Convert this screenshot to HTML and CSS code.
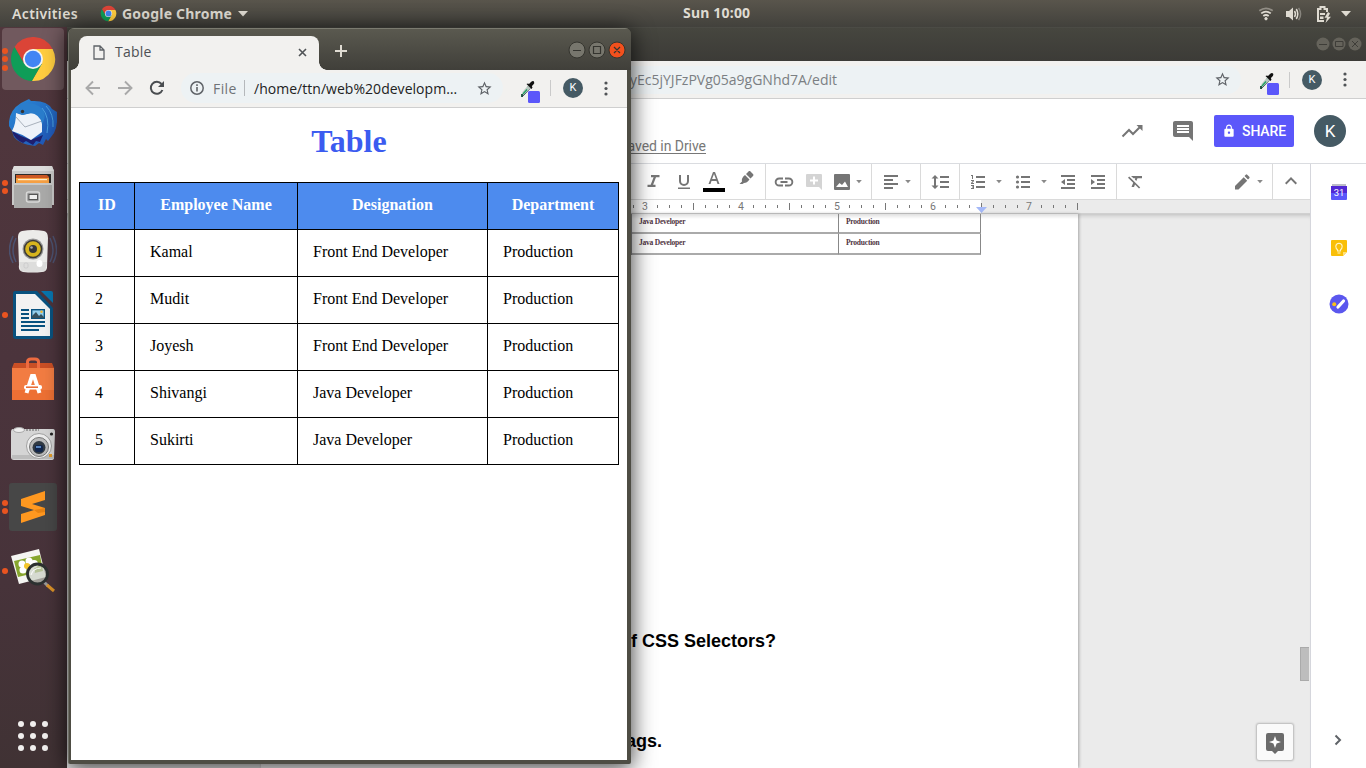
FILE: index.html
```html
<!DOCTYPE html>
<html lang="en">
<head>
<meta charset="utf-8">
<title>Desktop</title>
<link rel="stylesheet" href="styles.css">
</head>
<body>
<svg class="defs" width="0" height="0">
  <symbol id="chrome" viewBox="0 0 48 48">
    <path fill="#db4437" d="M5.54 12.03A22 22 0 0 1 43.6 14H24L24 24 15.34 29Z"/>
    <path fill="#ffcd40" d="M43.6 14A22 22 0 0 1 22.86 45.97L32.66 29 24 24V14Z"/>
    <path fill="#0f9d58" d="M22.86 45.97A22 22 0 0 1 5.54 12.03L15.34 29 24 24 32.66 29Z"/>
    <circle cx="24" cy="24" r="10" fill="#f4f4f4"/><circle cx="24" cy="24" r="8.2" fill="#4285f4"/>
  </symbol>
  <symbol id="star" viewBox="0 0 24 24"><path d="M22 9.24l-7.19-.62L12 2 9.19 8.63 2 9.24l5.46 4.73L5.82 21 12 17.27 18.18 21l-1.63-7.03L22 9.24zM12 15.4l-3.76 2.27 1-4.28-3.32-2.88 4.38-.38L12 6.1l1.71 4.04 4.38.38-3.32 2.88 1 4.28L12 15.4z"/></symbol>
  <symbol id="dropper" viewBox="0 0 22 24">
    <path d="M9.500 7L12 9.500 6 16 4 17.500" fill="none" stroke="#345" stroke-width="1"/><path d="M10 6.500L12.500 9 6 15.500 4 17 4.500 13Z" fill="#b9c8c0"/><path d="M9 10.500L5 15" stroke="#20a060" stroke-width="1.300"/>
    <path d="M8.500 5L10 4.500 11 5 13 3Q15 1.200 16 2.500 17 4 15 6L13.800 7 14.500 8.500 13.500 10Z" fill="#111"/><path d="M4 15V18" stroke="#174a35" stroke-width="1.800"/>
    <rect x="10" y="12" width="12" height="12" rx="1.500" fill="#5b57fa"/>
  </symbol>
  <symbol id="dots" viewBox="0 0 6 18"><circle cx="3" cy="3" r="1.600"/><circle cx="3" cy="8.500" r="1.600"/><circle cx="3" cy="14" r="1.600"/></symbol>
  <symbol id="caret" viewBox="0 0 8 4"><path d="M1.200 0H6.800L4 3.300Z"/></symbol>
</svg>
<div class="desktop">
  <header class="topbar">
    <span class="activities">Activities</span>
    <svg class="top-chrome"><use href="#chrome"/></svg>
    <span class="appname">Google Chrome</span>
    <svg class="top-caret" viewBox="0 0 10 6"><path d="M0 0H10L5 5.500Z"/></svg>
    <span class="clock">Sun 10:00</span>
    <div class="tray">
      <svg width="16" height="16" viewBox="0 0 16 16" fill="none" stroke="#dfdbd2" stroke-width="1.800"><path d="M1.300 4.800Q8-.2 14.700 4.800" opacity=".45"/><path d="M3.200 7.400Q8 3.800 12.800 7.400M5.300 10Q8 8 10.700 10"/><circle cx="8" cy="12.700" r="1.200" fill="#dfdbd2" stroke-width="1"/></svg>
      <svg width="16" height="16" viewBox="0 0 16 16"><path fill="#dfdbd2" d="M0 5H3L7 1.500V14.500L3 11H0Z"/><path d="M8.500 5Q10.500 8 8.500 11M10.300 3Q13.300 8 10.300 13" fill="none" stroke="#dfdbd2" stroke-width="1.500"/><path d="M12.600 1.800Q16.600 8 12.600 14.200" fill="none" stroke="#88857e" stroke-width="1.500"/></svg>
      <svg width="16" height="18" viewBox="0 0 16 18"><path d="M8 16H2V4H4.500V2H8.500V4H11V7" fill="none" stroke="#dfdbd2" stroke-width="2"/><path d="M4 8H9V10H4ZM4 11.500H7.500V14H4Z" fill="#dfdbd2"/><path d="M12 7L8.500 12.800H11L9.500 18 15 11.800H12.200L14 8.500Z" fill="#dfdbd2"/></svg>
      <svg width="10" height="6" viewBox="0 0 10 6"><path fill="#dfdbd2" d="M0 0H10L5 5.500Z"/></svg>
    </div>
  </header>

  <div class="space">
    <nav class="dock">
      <div class="app active"><span class="run"><i></i><i></i><i></i></span><svg><use href="#chrome"/></svg></div>
      <div class="app"><span class="run"></span>
        <svg viewBox="0 0 48 48"><defs><linearGradient id="tb" x2="1" y2="1"><stop stop-color="#2b8bd8"/><stop offset="1" stop-color="#1e4fb0"/></linearGradient></defs>
          <path fill="url(#tb)" d="M12 4L16 2 20 0 22 2Q38 1 43 10L48 13Q49 27 45 34L39 42 37 40 34 46 30 44 26 47Q10 45 5 38L3 32 0 27Q-1 12 12 4Z"/>
          <path fill="#1f1f6e" d="M3 32L12 37 22 41 34 36 31 43 27 42 24 46 17 42 14 44Q5 40 3 32Z"/>
          <path fill="#eef2f8" d="M7 14L13 16 28 13 33 19 33 33 22 41Q13 35 3 32Q7 25 7 14Z"/><path d="M7 18L16 28 33 22" fill="none" stroke="#a9b1bc"/>
          <path fill="#2a7dcc" d="M9 8Q12 3 19 4Q32 5 35 13Q37 19 33 25Q31 15 21 14L14 16 9 14Z"/><path fill="none" stroke="#4ba1e0" d="M37 7Q45 15 44 28M33 9Q41 18 38 34"/><circle cx="13.500" cy="12.500" r="1.700" fill="#333"/></svg></div>
      <div class="app"><span class="run two"><i></i><i></i></span>
        <svg viewBox="0 0 48 48"><path fill="#c9c9c8" d="M5 3H43L45 8V42H3V8Z"/><path fill="#dededd" d="M5 3H43L45 8H3Z"/><path fill="#2d2b29" d="M6 11H42V20H6Z"/><path fill="#cd5823" d="M7 12H38L40 14V19H7Z"/><path fill="#f6a043" d="M7 15H40V20H7Z"/><path fill="#fff0cf" d="M9 16H38V17.200H9Z"/><path fill="#aaaaa9" d="M5 20H43V45H5Z"/><path fill="#c9c9c8" d="M5 20H43V22H5Z"/><rect x="17.500" y="29" width="13" height="10" rx="2" fill="#999" stroke="#d8d8d7" stroke-width="1.500"/><rect x="20" y="31.500" width="8.500" height="5" fill="#eee" stroke="#555"/></svg></div>
      <div class="app"><span class="run"></span>
        <svg viewBox="0 0 48 48"><path d="M4 9Q-3 23 4 36M7 11Q1 23 7 35M44 9Q51 23 44 36M41 11Q47 23 41 35" fill="none" stroke="#4c5270" stroke-width="1.500"/><path fill="#ececea" d="M13 4Q24 2 35 4Q39 5 39 11L38 41Q37 45 33 45Q24 46 14 45Q9 44 10 38L9 10Q9 5 13 4Z"/><path fill="#d1d1cf" d="M10 35L12 44Q24 46 36 44L38 35Z" opacity=".55"/><circle cx="24" cy="22" r="10.500" fill="#999"/><circle cx="24" cy="22" r="9.300" fill="#3b3a37"/><circle cx="24" cy="22" r="7.800" fill="#d6b41d"/><circle cx="24" cy="22" r="4" fill="#353637"/><circle cx="22.500" cy="20.500" r="1.300" fill="#aaa"/><ellipse cx="30.500" cy="36.500" rx="3" ry="3.500" fill="#fff"/><rect x="15" y="36" width="4" height="5" rx="1.500" fill="none" stroke="#ccc"/></svg></div>
      <div class="app"><span class="run"><i></i></span>
        <svg viewBox="0 0 48 48"><path fill="#09527f" d="M6 0H28L44 17V45Q44 48 41 48H7Q4 48 4 45V3Q4 0 6 0Z"/><path fill="#0875ad" d="M32 0H42Q44 0 44 2V12Z"/><path fill="#f2f2f2" d="M7 3H26L41 18V45H7Z"/><path d="M12 19H20M12 23H20M12 27H20M12 31H36M12 35H36M12 39H30" stroke="#09527f" stroke-width="2"/><rect x="22.700" y="18.700" width="12.600" height="8.600" fill="#94d0ee" stroke="#09527f" stroke-width="1.400"/><path fill="#37515e" d="M23 27V25L27 21 30 25 32 23 35 26V27Z"/><circle cx="32.500" cy="20.700" r="1.200" fill="#f8b62d"/></svg></div>
      <div class="app"><span class="run"></span>
        <svg viewBox="0 0 48 48"><path fill="#c94f25" d="M5 8H43L45 13H3Z"/><path fill="none" stroke="#ed6b40" stroke-width="3" d="M18.500 15V7Q18.500 4 22 4H26Q29.500 4 29.500 7V15"/><path fill="#f27c42" d="M3 13H45V45H3Z"/><path fill="#ed7034" d="M3 35H45V45H3Z"/><path d="M17.500 38L23 21H25L30.500 38" stroke="white" stroke-width="4" fill="none"/><path d="M22 21H26" stroke="#fff" stroke-width="2"/><rect x="15" y="30" width="18" height="4.500" rx="2" fill="#fff"/><path d="M17 32.200H29" stroke="#e9662d" stroke-width="1.500"/></svg></div>
      <div class="app"><span class="run"></span>
        <svg viewBox="0 0 48 48"><path fill="#d5d5d5" d="M4 10H44Q46 10 46 13L45 39Q45 41 42 41H5Q2 41 2 38V13Q2 10 4 10Z"/><path fill="#bdbdbd" d="M3 36H45V40H3Z"/><ellipse cx="10" cy="11" rx="5.500" ry="2.500" fill="#eee" stroke="#aaa"/><path d="M17 11H30" stroke="#888" stroke-width="1.500" stroke-dasharray="2 1"/><circle cx="30" cy="27" r="12.500" fill="#eee" stroke="#a0a0a0"/><circle cx="30" cy="28" r="9.500" fill="#bbb" stroke="#777"/><circle cx="30" cy="28.500" r="6.500" fill="#303942"/><rect x="26" y="26" width="8" height="7" rx="2" fill="#12264c"/><path fill="#5885be" d="M27 27H32V29H27Z"/><circle cx="42.500" cy="15" r="1.600" fill="#222"/><path fill="#e39b29" d="M40 35H43V38H40Z"/></svg></div>
      <div class="app"><span class="run two"><i></i><i></i></span>
        <svg viewBox="0 0 48 48"><rect width="48" height="48" rx="3" fill="#474747"/><path fill="#ff9820" d="M12 16L36 8V17L23 21 36 25V32L12 40V31L25 27 12 23Z"/><path fill="#e88312" d="M25 27L36 25V29L29 30Z"/></svg></div>
      <div class="app"><span class="run"><i></i></span>
        <svg viewBox="0 0 48 48"><path fill="#f5f5f2" d="M2 9L30 2 37 30 10 37Z"/><path fill="#87a62e" d="M5 14L31 8 34 24 9 30Z"/><g fill="#fff"><circle cx="13" cy="17" r="3.500"/><circle cx="20" cy="14" r="3.500"/><circle cx="14" cy="23" r="3.500"/><circle cx="22" cy="24" r="4"/><circle cx="25" cy="17" r="4"/></g><circle cx="18" cy="19" r="3" fill="#f5c62b"/><path d="M35 35L39 39" stroke="#999" stroke-width="3"/><path d="M38 38L45 44" stroke="#dc9328" stroke-width="3"/><circle cx="28.500" cy="27" r="10" fill="#c9cec3" fill-opacity=".7" stroke="#2c3030" stroke-width="2.800"/><path d="M22 28Q24 21 32 21" stroke="#fff" fill="none"/></svg></div>
      <svg class="launcher" viewBox="0 0 30 30" fill="#f1efee"><g id="l"><circle cx="3" cy="3" r="3"/><circle cx="15" cy="3" r="3"/><circle cx="27" cy="3" r="3"/></g><use href="#l" y="12"/><use href="#l" y="24"/></svg>
    </nav>

    <main class="workspace">
      <section class="window back">
        <div class="back-title">
          <svg width="46" height="14" viewBox="0 0 46 14"><g fill="#65635b"><circle cx="7" cy="7" r="6.500"/><circle cx="23" cy="7" r="6.500"/><circle cx="39" cy="7" r="6.500"/></g><g fill="none" stroke="#3e3d38"><path d="M3 7.500H11M19.500 4.500H27V9.500H19.500ZM36 4L42 10M42 4L36 10"/></g></svg>
        </div>
        <div class="back-nav">
          <div class="back-omni"><span class="back-url">yEc5jYJFzPVg05a9gGNhd7A/edit</span><svg class="star"><use href="#star"/></svg></div>
          <svg class="dropper"><use href="#dropper"/></svg><span class="divider"></span><span class="mini">K</span><svg class="dots"><use href="#dots"/></svg>
        </div>
        <div class="docs-head">
          <span class="saved">saved in Drive</span>
          <div class="docs-actions">
            <svg width="24" height="24" viewBox="0 0 24 24"><path d="M2.500 17.500L9 11 13 15 20.500 7.500" fill="none" stroke="#757575" stroke-width="2"/><path fill="#757575" d="M16.500 6H22.500V12Z"/></svg>
            <svg class="talk" width="24" height="24" viewBox="0 0 24 24"><path fill="#757575" d="M21.990 4c0-1.100-.89-2-1.990-2H4c-1.100 0-2 .9-2 2v12c0 1.100.9 2 2 2h14l4 4-.01-18zM18 14H6v-2h12v2zm0-3H6V9h12v2zm0-3H6V6h12v2z"/></svg>
            <span class="share"><svg width="14" height="14" viewBox="0 0 24 24"><path fill="#fff" d="M18 8h-1V6c0-2.760-2.240-5-5-5S7 3.240 7 6v2H6c-1.100 0-2 .9-2 2v10c0 1.100.9 2 2 2h12c1.100 0 2-.9 2-2V10c0-1.100-.9-2-2-2zm-6 9c-1.100 0-2-.9-2-2s.9-2 2-2 2 .9 2 2-.9 2-2 2zm3.100-9H8.900V6c0-1.710 1.390-3.100 3.100-3.100 1.710 0 3.100 1.390 3.100 3.100v2z"/></svg>SHARE</span>
            <span class="avatar">K</span>
          </div>
        </div>
        <div class="docs-body">
          <div class="editor">
            <div class="tools">
              <div class="group g1">
                <svg viewBox="0 0 24 24"><path d="M10 6v2.200h2.600l-2.900 7.600H6.500V18H14.500v-2.200h-2.400l2.900-7.600H18.500V6z"/></svg>
                <svg viewBox="0 0 24 24"><path d="M12 17a5 5 0 0 0 5-5V6h-2v6a3 3 0 0 1-6 0V6H7v6a5 5 0 0 0 5 5zM6 18.500h12V20H6z"/></svg>
                <svg viewBox="0 0 24 24"><path d="M11 3L6.500 15h2l1-3h5l1 3h2L13 3zM10.100 10L12 4.900 13.900 10z"/><path fill="#000" d="M1 19H23V23H1Z"/></svg>
                <svg class="pen" viewBox="0 0 24 24"><path d="M16 2L19 5Q20 6 19 7L16.500 9.500 12 5 15 2ZM11 6L15.500 10.500Q13 14 10 14L8.500 15H5.500L8 12.500Q7 9 11 6Z"/></svg>
              </div>
              <div class="group g2">
                <svg viewBox="0 0 24 24"><path d="M4.600 12c0-1.500 1.200-2.600 2.600-2.600H11V7.500H7.200a4.500 4.500 0 0 0 0 9H11v-1.900H7.200A2.600 2.600 0 0 1 4.600 12zM8.500 13h7v-2h-7zm8.300-5.500H13v1.900h3.800a2.600 2.600 0 0 1 0 5.200H13v1.900h3.800a4.500 4.500 0 0 0 0-9z"/></svg>
                <svg viewBox="0 0 24 24"><path fill="#d4d4d4" d="M5 4H19Q20 4 20 5V20L17 17H5Q4 17 4 16V5Q4 4 5 4Z"/><path d="M12 6.500V14.500M8 10.500H16" stroke="#fff" stroke-width="2"/></svg>
                <svg class="pic" viewBox="0 0 24 24"><path d="M5 4H19Q20 4 20 5V19Q20 20 19 20H5Q4 20 4 19V5Q4 4 5 4ZM6 17H18L15 11.500 12 15 9.500 13Z" fill-rule="evenodd"/></svg>
                <svg class="c"><use href="#caret"/></svg>
              </div>
              <div class="group g3"><svg viewBox="0 0 24 24"><path d="M5 5H19V7H5ZM5 9H14V11H5ZM5 13H19V15H5ZM5 17H14V19H5Z"/></svg><svg class="c"><use href="#caret"/></svg></div>
              <div class="group g4"><svg viewBox="0 0 24 24"><path d="M7 5L3.500 8.500H6V15.500H3.500L7 19 10.500 15.500H8V8.500H10.500ZM12 6H21V8H12ZM12 11H21V13H12ZM12 16H21V18H12Z"/></svg></div>
              <div class="group g5">
                <svg viewBox="0 0 24 24"><path d="M10 6H19V8H10ZM10 11H19V13H10ZM10 16H19V18H10ZM5 5H7V9H6V6H5ZM5 10H8V11L6.300 13H8V14H5V13L6.700 11H5ZM5 15H8V19H5V18H7V17.500H6V16.500H7V16H5Z"/></svg><svg class="c"><use href="#caret"/></svg>
                <svg viewBox="0 0 24 24"><path d="M10 6H19V8H10ZM10 11H19V13H10ZM10 16H19V18H10Z"/><circle cx="6.500" cy="7" r="1.600"/><circle cx="6.500" cy="12" r="1.600"/><circle cx="6.500" cy="17" r="1.600"/></svg><svg class="c"><use href="#caret"/></svg>
                <svg class="dent" viewBox="0 0 24 24"><path d="M5 5H19V7H5ZM11 9H19V11H11ZM11 13H19V15H11ZM5 17H19V19H5ZM5 12L9 9V15Z"/></svg>
                <svg class="dent2" viewBox="0 0 24 24"><path d="M5 5H19V7H5ZM11 9H19V11H11ZM11 13H19V15H11ZM5 17H19V19H5ZM9 12L5 9V15Z"/></svg>
              </div>
              <div class="group g6"><svg viewBox="0 0 24 24"><path d="M8 6H19V8.200H14.500L13.300 11 11.800 9.500 12.300 8.200H10.500ZM6.200 6.500L5 7.700 10.200 12.800 8.500 17H11L12 14.600 16 18.600 17.200 17.400Z"/></svg></div>
              <div class="group g7"><svg viewBox="0 0 24 24"><path d="M5 16V19.500H8.500L17.200 10.800 13.700 7.200ZM19.300 8.200Q20 7.500 19.300 6.800L17.200 4.700Q16.500 4 15.800 4.700L14.500 6 18 9.500Z"/></svg><svg class="c"><use href="#caret"/></svg></div>
              <div class="group g8"><svg viewBox="0 0 24 24"><path d="M12 7L6 13 7.400 14.400 12 9.800 16.600 14.400 18 13Z"/></svg></div>
            </div>
            <div class="ruler">
              <svg width="689" height="13" viewBox="621 200 689 13"><path fill="#ebebeb" d="M981 200H1310V213H981Z"/>
                <path stroke="#777" d="M633.500 205V208M657.500 205V208M669.500 205V208M681.500 205V208M705.500 205V208M717.500 205V208M729.500 205V208M753.500 205V208M765.500 205V208M777.500 205V208M801.500 205V208M813.500 205V208M825.500 205V208M849.500 205V208M861.500 205V208M873.500 205V208M897.500 205V208M909.500 205V208M921.500 205V208M945.500 205V208M957.500 205V208M969.500 205V208M993.500 205V208M1005.500 205V208M1017.500 205V208M1041.500 205V208M1053.500 205V208M1065.500 205V208M693.500 203V210M789.500 203V210M885.500 203V210M981.500 203V210M1077.500 203V210"/>
                <path fill="#a4b8f7" d="M976 207H987L981.500 213Z"/>
                <g class="nums"><text x="645" y="210">3</text><text x="741" y="210">4</text><text x="837" y="210">5</text><text x="933" y="210">6</text><text x="1029" y="210">7</text></g></svg>
            </div>
            <div class="canvas">
              <article class="page">
                <div class="figure"><span>Java Developer</span><span>Production</span><span>Java Developer</span><span>Production</span></div>
                <h2 class="q1">of CSS Selectors?</h2>
                <h2 class="q2">tags.</h2>
              </article>
              <i class="thumb"></i>
              <span class="explore"><svg width="24" height="24" viewBox="0 0 24 24"><path fill="#6b6b6b" d="M5 3H19Q21 3 21 5V19Q21 21 19 21H15L12 24 9 21H5Q3 21 3 19V5Q3 3 5 3Z"/><path fill="#fff" d="M12 6L13.600 10.400 18 12 13.600 13.600 12 18 10.400 13.600 6 12 10.400 10.400Z"/></svg></span>
            </div>
          </div>
          <aside class="side">
            <svg width="16" height="16" viewBox="0 0 16 16"><path fill="#bdbdc8" d="M1 0H15V3H1Z"/><path fill="#5128d4" d="M0 2H16V9H0Z"/><path fill="#5b57fa" d="M0 9H16V15Q16 16 15 16H1Q0 16 0 15Z"/><text class="cal" x="8" y="12.300">31</text></svg>
            <svg width="16" height="16" viewBox="0 0 16 16"><path fill="#f9bf08" d="M1 0H15Q16 0 16 1V12L12 16H1Q0 16 0 15V1Q0 0 1 0Z"/><path fill="#ffe07a" d="M12 16V12H16Z"/><path d="M6.500 9.800Q4.800 8.500 4.800 6.200Q5 3.300 8 3.200Q11 3.300 11.200 6.200Q11.200 8.500 9.500 9.800V11H6.500ZM6.500 13H9.500" fill="none" stroke="#fff3c4" stroke-width="1.100"/></svg>
            <svg width="20" height="20" viewBox="0 0 20 20"><circle cx="10" cy="10" r="9.500" fill="#5b57ee"/><circle cx="5.200" cy="10.200" r="2" fill="#fbc117"/><path d="M9 13L14.500 7" stroke="#fff" stroke-width="3.200" stroke-linecap="round"/></svg>
            <svg class="more" width="8" height="12" viewBox="0 0 8 12"><path d="M1.500 1.500L6 6 1.500 10.500" fill="none" stroke="#5f6368" stroke-width="2"/></svg>
          </aside>
        </div>
      </section>

      <section class="window front">
        <div class="tabs">
          <div class="tab"><svg width="12" height="15" viewBox="0 0 12 15"><path d="M1 1H7L11 5V14H1ZM7 1V5H11" fill="none" stroke="#5f6368" stroke-width="1.300"/></svg><span class="tabname">Table</span><svg class="x" width="9" height="9" viewBox="0 0 9 9"><path d="M1 1L8 8M8 1L1 8" stroke="#505356" stroke-width="1.600"/></svg></div>
          <svg class="plus" width="12" height="12" viewBox="0 0 12 12"><path d="M6 0V12M0 6H12" stroke="#dfdbd2" stroke-width="2"/></svg>
          <svg class="wm" width="58" height="18" viewBox="0 0 58 18"><g stroke="#35352f" stroke-width="1"><circle cx="9" cy="9" r="8" fill="#77766d"/><circle cx="29" cy="9" r="8" fill="#77766d"/><circle cx="49" cy="9" r="8" fill="#f2501d"/></g><path d="M5 9.500H13M25.500 5.500H32.500V12.500H25.500ZM46 6L52 12M52 6L46 12" fill="none" stroke="#34342f" stroke-width="1.200"/></svg>
        </div>
        <div class="nav">
          <svg class="n" viewBox="0 0 16 16"><path d="M15 8H2M8 1.500L1.500 8 8 14.500" fill="none" stroke="#a9a9a9" stroke-width="1.900"/></svg>
          <svg class="n" viewBox="0 0 16 16"><path d="M1 8H14M8 1.500L14.500 8 8 14.500" fill="none" stroke="#a9a9a9" stroke-width="1.900"/></svg>
          <svg class="n" viewBox="0 0 16 16"><path d="M13.400 10A6 6 0 1 1 12.500 4" fill="none" stroke="#4a4d50" stroke-width="2"/><path fill="#4a4d50" d="M15 1V7H9Z"/></svg>
          <div class="omni">
            <svg width="16" height="16" viewBox="0 0 16 16"><circle cx="8" cy="8" r="6.200" fill="none" stroke="#5f6368" stroke-width="1.500"/><path d="M8 7V11.500M8 4.300V6" stroke="#5f6368" stroke-width="1.600"/></svg>
            <span class="file">File</span><span class="bar"></span><span class="url">/home/ttn/web%20developm…</span><svg class="star"><use href="#star"/></svg>
          </div>
          <svg class="dropper"><use href="#dropper"/></svg><span class="divider"></span><span class="mini">K</span><svg class="dots"><use href="#dots"/></svg>
        </div>
        <div class="content">
          <h1>Table</h1>
          <table>
            <colgroup><col class="c1"><col class="c2"><col class="c3"><col class="c4"></colgroup>
            <tr><th>ID</th><th>Employee Name</th><th>Designation</th><th>Department</th></tr>
            <tr><td>1</td><td>Kamal</td><td>Front End Developer</td><td>Production</td></tr>
            <tr><td>2</td><td>Mudit</td><td>Front End Developer</td><td>Production</td></tr>
            <tr><td>3</td><td>Joyesh</td><td>Front End Developer</td><td>Production</td></tr>
            <tr><td>4</td><td>Shivangi</td><td>Java Developer</td><td>Production</td></tr>
            <tr><td>5</td><td>Sukirti</td><td>Java Developer</td><td>Production</td></tr>
          </table>
        </div>
      </section>
    </main>
  </div>
</div>
</body>
</html>
```
FILE: styles.css
```css
* { box-sizing: border-box; }
body { margin: 0; font-family: "Open Sans", "Noto Sans", sans-serif; }
svg { display: block; flex: none; }
.defs { position: absolute; }
.desktop { width: 1366px; height: 768px; overflow: hidden; display: flex; flex-direction: column; background: #42413c; }

.topbar { height: 27px; flex: none; display: flex; align-items: center; position: relative; padding: 0 15px 0 12px; background: linear-gradient(#59554c, #42413c); color: #dfdbd2; font: 700 14px/26px "Noto Sans", sans-serif; white-space: nowrap; }
.activities { width: 88px; letter-spacing: .35px; font-weight: 600; }
.top-chrome { width: 17px; height: 17px; }
.appname { width: 112px; margin-left: 5px; letter-spacing: .2px; }
.top-caret { width: 10px; height: 6px; margin-left: 4px; fill: #dfdbd2; }
.clock { position: absolute; left: 683px; top: 0; letter-spacing: .2px; }
.tray { display: flex; align-items: center; margin-left: auto; gap: 11px; }
.tray svg:nth-child(2) { margin-left: 1px; }
.tray svg:nth-child(3) { margin-left: 3px; margin-right: -2px; }

.space { flex: 1; display: flex; min-height: 0; }
.dock { width: 67px; flex: none; display: flex; flex-direction: column; gap: 2px; padding: 1px 2px 0; background: linear-gradient(#51373d, #4b343c 45%, #47333a 75%, #403234); }
.app { height: 62px; width: 62px; flex: none; display: flex; align-items: center; border-radius: 4px; }
.app.active { background: #71595e; }
.app > svg { width: 48px; height: 48px; margin-left: 1px; }
.run { width: 6px; display: flex; flex-direction: column; gap: 2.500px; }
.run i { width: 6px; height: 6px; border-radius: 50%; background: #e95420; }
.launcher { width: 30px; height: 30px; margin: auto 0 17px 16px; }

.workspace { position: relative; flex: 1; }
.window { position: absolute; overflow: hidden; display: flex; flex-direction: column; }
.back { left: 0; top: 0; width: 1299px; height: 741px; background: #fff; }
.back-title { height: 34px; flex: none; display: flex; justify-content: flex-end; align-items: center; padding: 0 4px 1px 0; background: linear-gradient(#46463f, #3c3b37); border-top: 1px solid #4b4b45; }
.back-nav { height: 38px; flex: none; display: flex; align-items: center; background: #f2f1ef; border-bottom: 1px solid #cfcfcf; }
.back-omni { width: 1074px; margin-left: 100px; height: 28px; border-radius: 14px; display: flex; align-items: center; background: #edf2f4; }
.back-url { width: 670px; text-align: right; font-size: 14px; color: #7b7f83; }
.back-omni .star { margin-left: auto; margin-right: 10px; }
.star { width: 17px; height: 17px; fill: #5f6368; }
.dropper { width: 22px; height: 24px; margin-left: 16px; margin-top: 6px; }
.divider { width: 1px; height: 16px; margin-left: 10px; background: #cacaca; }
.mini { width: 20px; height: 20px; margin-left: 12px; border-radius: 50%; background: #455a64; color: #fff; font: 11px/20px Roboto, sans-serif; text-align: center; flex: none; }
.dots { width: 6px; height: 18px; margin-left: 19.500px; margin-top: 1px; fill: #505356; }

.docs-head { height: 65px; flex: none; display: flex; border-bottom: 1px solid #dadce0; }
.saved { width: 639px; margin-top: 39px; text-align: right; font: 14px/17px Roboto, sans-serif; letter-spacing: -.05px; color: #777; text-decoration: underline; text-underline-offset: 2px; }
.docs-actions { flex: 1; display: flex; justify-content: flex-end; align-items: center; padding-right: 20px; }
.talk { margin-left: 27px; }
.share { display: flex; align-items: center; width: 80px; height: 32px; margin: 0 20px 0 19px; padding-left: 8px; gap: 6px; background: #5b57fa; color: #fff; border-radius: 2px; font: 500 14px Roboto, sans-serif; letter-spacing: -.1px; }
.avatar { width: 32px; height: 32px; border-radius: 50%; background: #455a64; color: #fff; font: 17px/32px Roboto, sans-serif; text-align: center; }

.docs-body { flex: 1; display: flex; min-height: 0; }
.editor { flex: 1; display: flex; flex-direction: column; }
.tools { height: 36px; flex: none; display: flex; padding-left: 570px; border-bottom: 1px solid #dadada; fill: #757575; }
.group { display: flex; align-items: center; border-right: 1px solid #dadada; }
.group > svg { width: 24px; height: 24px; }
.group > .c { width: 8px; height: 4px; opacity: .85; }
.g1 { width: 129px; padding: 0 0 1px 4px; gap: 6.500px; }
.g1 .pen { margin-left: 1px; }
.g2 { width: 106px; padding-left: 6px; gap: 6px; }
.g2 .pic { margin-left: -2px; }
.g2 .c { margin-left: -5px; }
.g3 { width: 49px; padding-left: 7px; gap: 1px; }
.g4 { width: 39px; padding-left: 7px; }
.g5 { width: 157px; padding-left: 6px; }
.g5 .c { margin: 0 8px 0 5px; }
.g5 .dent { margin-left: 0; }
.g5 .dent2 { margin-left: 6px; }
.g6 { flex: 1; border-right: 0; padding-left: 6px; }
.g7 { width: 43px; gap: 2px; }
.g8 { width: 37px; padding-left: 6px; border-right: 0; }
.ruler { height: 14px; flex: none; display: flex; justify-content: flex-end; border-bottom: 1px solid #d0d0d0; background: #fff; }
.nums text { font: 10.500px Roboto, sans-serif; fill: #777; text-anchor: middle; }
.canvas { flex: 1; position: relative; background: #ebebeb; padding-left: 194px; box-shadow: inset 0 5px 5px -4px rgba(0,0,0,.22); }
.page { width: 817px; height: 100%; display: flex; flex-direction: column; background: linear-gradient(rgba(0,0,0,.12), transparent 5px), #fff; box-shadow: 1px 0 3px rgba(0,0,0,.3); }
.figure { display: grid; grid-template-columns: 207px 142px; grid-template-rows: 20px 21px; width: 350px; margin-left: 370px; flex: none; border-left: 1px solid #888; }
.figure span { border-right: 1px solid #888; border-bottom: 2px solid #aaa; padding-left: 7px; font: 700 7.500px/16px "Liberation Serif", serif; letter-spacing: -.22px; color: #50343f; }
.figure span:nth-child(n+3) { line-height: 18px; }
.page h2 { margin: 0; font: 700 18px/22px "Liberation Sans", sans-serif; text-align: right; color: #000; flex: none; }
.q1 { width: 515px; padding-top: 375px; }
.q2 { width: 401px; padding-top: 78px; }
.thumb { position: absolute; right: 1px; top: 433px; width: 9px; height: 34px; background: #bdbdbd; border: 1px solid #aaa; border-right: 0; }
.explore { position: absolute; right: 17px; top: 510px; width: 36px; height: 36px; padding: 6px; background: #fafafa; border-radius: 2px; box-shadow: 0 0 2px 1px rgba(0,0,0,.22); }
.side { width: 56px; display: flex; flex-direction: column; align-items: center; padding-top: 20px; border-left: 1px solid #d5d6dc; background: #fff; gap: 40px; }
.side svg:nth-child(3) { margin-top: -2px; }
.side .more { margin: auto 2px 22px 0; }
.cal { font: 9.500px Roboto, sans-serif; fill: #fff; text-anchor: middle; }

.front { left: 1px; top: 1px; width: 563px; height: 736px; padding: 0 4px 4px 2px; background: #4e4d44; border-radius: 6px 6px 2px 2px; border-left: 1px solid #6d6e64; box-shadow: 0 3px 22px 1px rgba(0,0,0,.75); }
.tabs { height: 42px; flex: none; display: flex; align-items: center; margin: 0 -4px 0 -2px; padding: 3px 5px 0 10px; background: linear-gradient(#5a594f, #403f3a); border-top: 1px solid #7b7b70; }
.tab { position: relative; align-self: flex-end; width: 240px; height: 34px; display: flex; align-items: center; padding: 0 12px 1px 14px; border-radius: 8px 8px 0 0; background: #f2f1ef; }
.tab::before, .tab::after { content: ""; position: absolute; bottom: 0; width: 8px; height: 8px; }
.tab::before { left: -8px; background: radial-gradient(circle at 0 0, transparent 7.500px, #f2f1ef 8px); }
.tab::after { right: -8px; background: radial-gradient(circle at 100% 0, transparent 7.500px, #f2f1ef 8px); }
.tabname { margin-left: 10px; font-size: 14px; line-height: 18px; letter-spacing: .2px; margin-top: -1px; color: #4d5054; }
.x { margin-left: auto; }
.plus { margin-left: 16px; }
.wm { margin-left: auto; margin-top: -3px; }
.nav { height: 38px; flex: none; display: flex; align-items: center; padding: 0 0 1px 14px; background: #f2f1ef; border-bottom: 1px solid #cfcfcf; }
.n { width: 16px; height: 16px; margin: -1px 16px 0 0; }
.omni { display: flex; align-items: center; width: 322px; height: 30px; padding: 0 10px 0 8px; border-radius: 15px; background: #edf2f4; white-space: nowrap; font-size: 14px; }
.file { width: 24px; margin-left: 8px; letter-spacing: .4px; color: #6f7377; }
.bar { width: 1px; height: 16px; margin: 0 9px 0 7px; background: #b5b8bb; }
.url { letter-spacing: .03px; color: #222; }
.omni .star { margin-left: auto; }
.nav .dropper { margin-left: 15px; }
.content { flex: 1; padding: 15px 8px 0; background: #fff; font-family: "Liberation Serif", serif; font-size: 16px; color: #000; }
.content h1 { margin: 0 0 22px; font-size: 32px; line-height: 37px; text-align: center; color: #3b5bf0; }
.content table { width: 539px; table-layout: fixed; border-collapse: collapse; }
.content th, .content td { height: 47px; padding: 0 15px 2px; border: 1px solid #000; text-align: left; }
.content th { text-align: center; background: #4d8bee; color: #fff; }
.c1 { width: 55px; }
.c2 { width: 163px; }
.c3 { width: 190px; }
.c4 { width: 131px; }
```
